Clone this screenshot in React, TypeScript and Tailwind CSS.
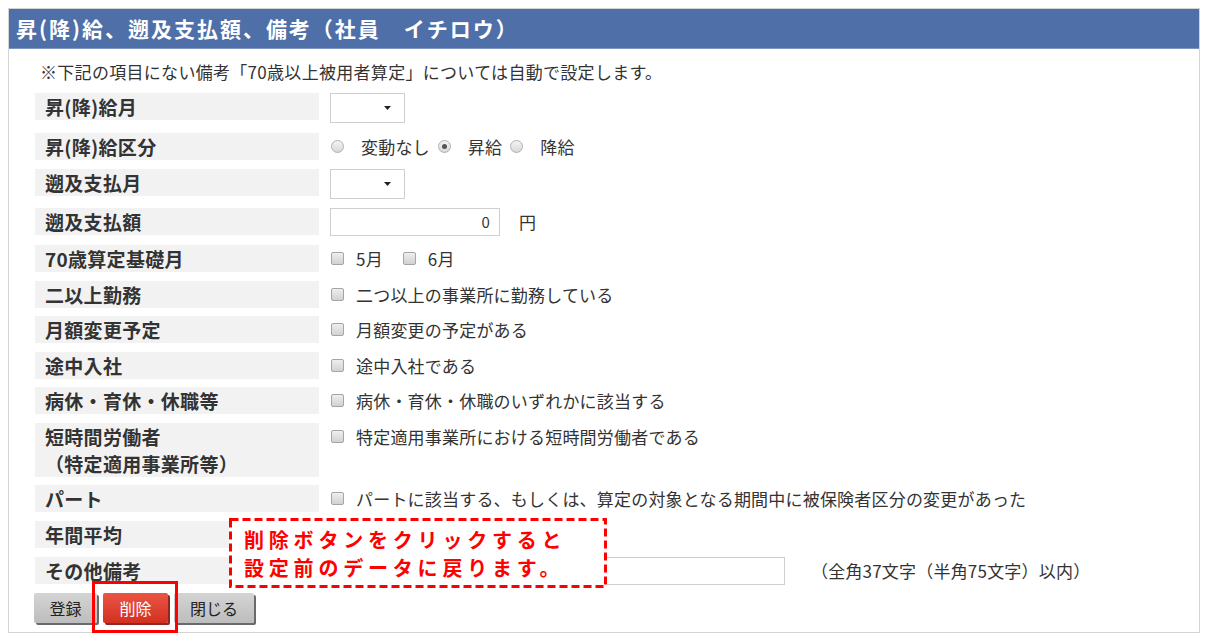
import React from "react";

const JP = "font-['Noto_Sans_CJK_JP','Noto_Sans_CJK_SC',sans-serif]";

function Check({ label, className = "" }: { label: string; className?: string }) {
  return (
    <span className={`inline-flex items-center ${className}`}>
      <span className="inline-block w-[13px] h-[13px] rounded-[2px] border border-[#a5a5a5] bg-gradient-to-b from-[#eeeeee] to-[#d2d2d2]" />
      <span className="ml-[12px]">{label}</span>
    </span>
  );
}

function Radio({ label, checked = false }: { label: string; checked?: boolean }) {
  return (
    <span className="inline-flex items-center mr-[8px]">
      <span className="inline-flex items-center justify-center w-[13px] h-[13px] rounded-full border border-[#b0b0b0] bg-gradient-to-b from-[#f4f4f4] to-[#d8d8d8]">
        {checked && <span className="w-[5px] h-[5px] rounded-full bg-[#555]" />}
      </span>
      <span className="ml-[17px]">{label}</span>
    </span>
  );
}

function Select() {
  return (
    <div className="w-[75px] h-[30px] border border-[#cfcfcf] bg-white flex items-center justify-end pr-[13px]">
      <svg width="7" height="4" viewBox="0 0 7 4">
        <path d="M0 0 L7 0 L3.5 4 Z" fill="#222" />
      </svg>
    </div>
  );
}

function Row({
  label,
  children,
  mb = "mb-[9px]",
  tall = false,
}: {
  label: React.ReactNode;
  children?: React.ReactNode;
  mb?: string;
  tall?: boolean;
}) {
  return (
    <div className={`flex items-start ${mb}`}>
      <div
        className={`w-[284px] shrink-0 bg-[#f2f2f2] pl-[10px] text-[19px] font-bold leading-[27px] tracking-[0.3px] text-[#333] ${
          tall ? "h-[54px]" : "h-[27px]"
        }`}
      >
        {label}
      </div>
      <div className="ml-[11px] min-h-[27px] flex items-center text-[17px] tracking-[0.2px] text-[#333]">{children}</div>
    </div>
  );
}

export default function App() {
  return (
    <div className={`relative w-[1223px] h-[640px] bg-white pt-[8px] pl-[8px] ${JP}`}>
      <div className="w-[1192px] h-[625px] border border-[#d4d4d4] bg-white">
        <div className="h-[40px] bg-[#4f6fa8] border-b border-[#7d95c0] pl-[7px] flex items-center text-white text-[21px] font-bold leading-none tracking-[2px]">
          昇(降)給、遡及支払額、備考（社員　イチロウ）
        </div>
        <div className="pl-[26px]">
          <div className="mt-[11px] ml-[5px] h-[24px] leading-[24px] text-[17px] tracking-[0.3px] text-[#333]">
            ※下記の項目にない備考「70歳以上被用者算定」については自動で設定します。
          </div>
          <div className="mt-[9px]">
            <Row label="昇(降)給月" mb="mb-[10px]">
              <Select />
            </Row>
            <Row label="昇(降)給区分">
              <div className="h-[27px] flex items-center ml-[1px]">
                <Radio label="変動なし" />
                <Radio label="昇給" checked />
                <Radio label="降給" />
              </div>
            </Row>
            <Row label="遡及支払月">
              <Select />
            </Row>
            <Row label="遡及支払額">
              <div className="flex items-center">
                <div className="w-[170px] h-[28px] border border-[#cfcfcf] bg-white flex items-center justify-end pr-[9px] text-[15px]">
                  0
                </div>
                <span className="ml-[19px]">円</span>
              </div>
            </Row>
            <Row label="70歳算定基礎月">
              <div className="h-[27px] flex items-center ml-[1px]">
                <Check label="5月" className="mr-[20px]" />
                <Check label="6月" />
              </div>
            </Row>
            <Row label="二以上勤務" mb="mb-[8px]">
              <div className="h-[27px] flex items-center ml-[1px]">
                <Check label="二つ以上の事業所に勤務している" />
              </div>
            </Row>
            <Row label="月額変更予定">
              <div className="h-[27px] flex items-center ml-[1px]">
                <Check label="月額変更の予定がある" />
              </div>
            </Row>
            <Row label="途中入社" mb="mb-[8px]">
              <div className="h-[27px] flex items-center ml-[1px]">
                <Check label="途中入社である" />
              </div>
            </Row>
            <Row label="病休・育休・休職等">
              <div className="h-[27px] flex items-center ml-[1px]">
                <Check label="病休・育休・休職のいずれかに該当する" />
              </div>
            </Row>
            <Row
              label={
                <>
                  短時間労働者
                  <br />
                  （特定適用事業所等）
                </>
              }
              tall
              mb="mb-[8px]"
            >
              <div className="h-[27px] flex items-center ml-[1px]">
                <Check label="特定適用事業所における短時間労働者である" />
              </div>
            </Row>
            <Row label="パート">
              <div className="h-[27px] flex items-center ml-[1px]">
                <Check label="パートに該当する、もしくは、算定の対象となる期間中に被保険者区分の変更があった" />
              </div>
            </Row>
            <Row label="年間平均" />
            <Row label="その他備考" mb="mb-[8px]">
              <div className="flex items-center">
                <div className="w-[455px] h-[28px] border border-[#cfcfcf] bg-white" />
                <span className="ml-[26px]">（全角37文字（半角75文字）以内）</span>
              </div>
            </Row>
          </div>
          <div className="flex items-start gap-[6px] ml-[-1px] text-[16px]">
            <button className="h-[30px] w-[63px] rounded-[2px] bg-gradient-to-b from-[#d4d4d4] to-[#bdbdbd] text-[#222] shadow-[2px_2px_0_#6a6a6a] leading-[30px]">
              登録
            </button>
            <button className="h-[30px] w-[65px] rounded-[2px] bg-gradient-to-b from-[#eb5444] to-[#d32f1f] text-white shadow-[2px_2px_0_#8a2a20] leading-[30px]">
              削除
            </button>
            <button className="h-[30px] w-[80px] rounded-[2px] bg-gradient-to-b from-[#d4d4d4] to-[#bdbdbd] text-[#222] shadow-[2px_2px_0_#6a6a6a] leading-[30px]">
              閉じる
            </button>
          </div>
        </div>
      </div>

      {/* red highlight around delete button */}
      <div className="absolute left-[92px] top-[581px] w-[86px] h-[52px] border-[3px] border-[#ff0000]" />

      {/* callout */}
      <div className="absolute left-[229px] top-[518px] w-[378px] h-[70px] bg-white">
        <svg className="absolute inset-0" width="378" height="70" viewBox="0 0 378 70">
          <rect
            x="1.5"
            y="1.5"
            width="375"
            height="67"
            fill="none"
            stroke="#ff0000"
            strokeWidth="3"
            strokeDasharray="8 4"
          />
        </svg>
        <div className="relative pl-[15px] pt-[8px] text-[#ff0000] text-[20px] font-bold leading-[28px] tracking-[4.8px]">
          削除ボタンをクリックすると
          <br />
          設定前のデータに戻ります。
        </div>
      </div>
    </div>
  );
}
